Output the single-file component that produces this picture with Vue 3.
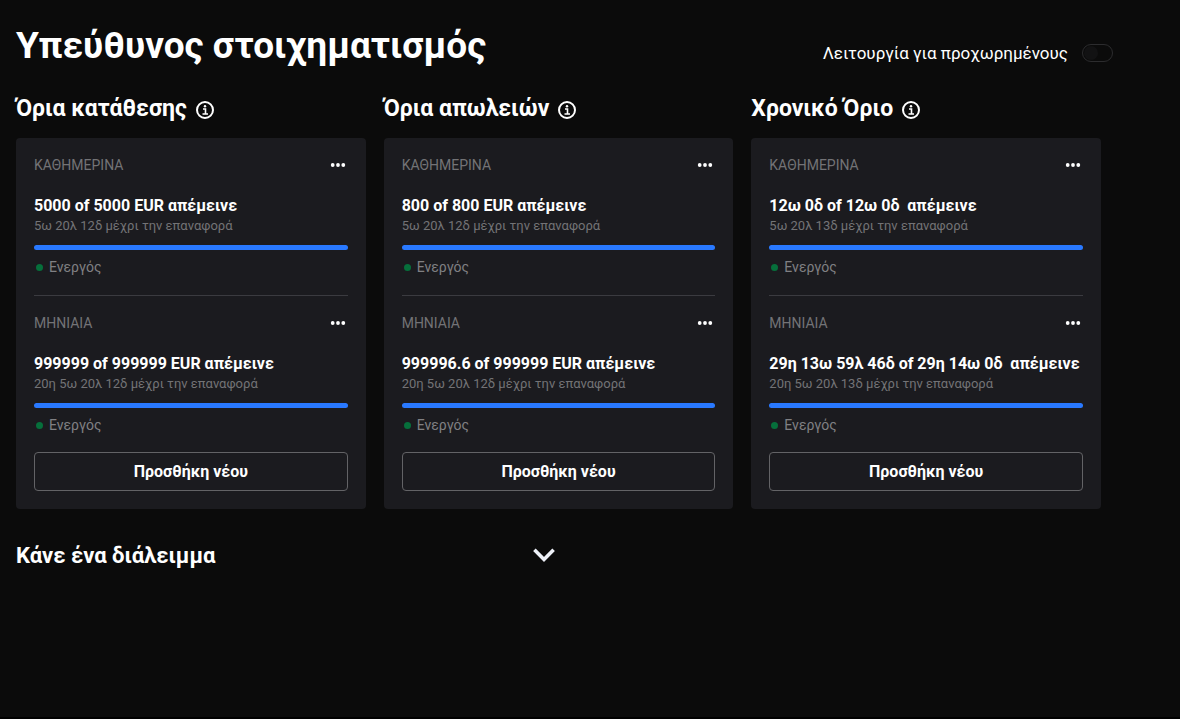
<script setup>
import { ref } from 'vue'

const advanced = ref(false)

const sections = [
  {
    title: 'Όρια κατάθεσης',
    limits: [
      { period: 'ΚΑΘΗΜΕΡΙΝΑ', amount: '5000 of 5000 EUR απέμεινε', reset: '5ω 20λ 12δ μέχρι την επαναφορά' },
      { period: 'ΜΗΝΙΑΙΑ', amount: '999999 of 999999 EUR απέμεινε', reset: '20η 5ω 20λ 12δ μέχρι την επαναφορά' }
    ]
  },
  {
    title: 'Όρια απωλειών',
    limits: [
      { period: 'ΚΑΘΗΜΕΡΙΝΑ', amount: '800 of 800 EUR απέμεινε', reset: '5ω 20λ 12δ μέχρι την επαναφορά' },
      { period: 'ΜΗΝΙΑΙΑ', amount: '999996.6 of 999999 EUR απέμεινε', reset: '20η 5ω 20λ 12δ μέχρι την επαναφορά' }
    ]
  },
  {
    title: 'Χρονικό Όριο',
    limits: [
      { period: 'ΚΑΘΗΜΕΡΙΝΑ', amount: '12ω 0δ of 12ω 0δ  απέμεινε', reset: '5ω 20λ 13δ μέχρι την επαναφορά' },
      { period: 'ΜΗΝΙΑΙΑ', amount: '29η 13ω 59λ 46δ of 29η 14ω 0δ  απέμεινε', reset: '20η 5ω 20λ 13δ μέχρι την επαναφορά' }
    ]
  }
]
</script>

<template>
  <main class="page">
    <header class="header">
      <h1>Υπεύθυνος στοιχηματισμός</h1>
      <label class="mode">
        <span>Λειτουργία για προχωρημένους</span>
        <input v-model="advanced" class="switch" type="checkbox" role="switch" />
      </label>
    </header>

    <div class="sections">
      <section v-for="section in sections" :key="section.title">
        <div class="heading">
          <h2>{{ section.title }}</h2>
          <button class="icon-button info" type="button" :aria-label="section.title">
            <svg width="20" height="20" viewBox="0 0 20 20" fill="none" stroke="#fff" stroke-width="2">
              <circle cx="10" cy="10" r="8" />
              <path d="M8 9h2.5v5M7.5 14h5.5" stroke-width="1.6" />
              <circle cx="10" cy="6.2" r="1.2" fill="#fff" stroke="none" />
            </svg>
          </button>
        </div>
        <div class="card">
          <article v-for="limit in section.limits" :key="limit.period" class="limit">
            <div class="top">
              <h3>{{ limit.period }}</h3>
              <button class="icon-button" type="button" :aria-label="limit.period">
                <svg width="20" height="18" viewBox="0 0 20 18" fill="#fff">
                  <circle cx="4.7" cy="9" r="1.9" />
                  <circle cx="10" cy="9" r="1.9" />
                  <circle cx="15.3" cy="9" r="1.9" />
                </svg>
              </button>
            </div>
            <p class="amount">{{ limit.amount }}</p>
            <p class="reset">{{ limit.reset }}</p>
            <div class="bar"></div>
            <p class="status"><span class="dot"></span>Ενεργός</p>
          </article>
          <button class="add" type="button">Προσθήκη νέου</button>
        </div>
      </section>
    </div>

    <button class="break" type="button">
      <span>Κάνε ένα διάλειμμα</span>
      <svg width="24" height="24" viewBox="0 0 24 24" fill="none" stroke="#eef1f8" stroke-width="3.6">
        <path d="M2.4 5.8 12 15.4 21.6 5.8" />
      </svg>
    </button>
  </main>
</template>

<style>
body {
  background: #0b0b0b;
}
</style>

<style scoped>
.page {
  box-sizing: border-box;
  min-height: 100vh;
  padding: 22px 16px 24px;
  border-bottom: 2px solid #000;
  background: #0b0b0b;
  color: #fff;
  font-family: Roboto, "Liberation Sans", sans-serif;
}

h1,
h2,
h3,
p {
  margin: 0;
}

button {
  padding: 0;
  border: 0;
  background: none;
  color: inherit;
  font: inherit;
  cursor: pointer;
}

svg {
  display: block;
}

.header {
  display: flex;
  align-items: center;
  justify-content: space-between;
  margin-right: 51px;
}

h1 {
  font-size: 37px;
  line-height: 48px;
  font-weight: 700;
}

.mode {
  display: flex;
  align-items: center;
  gap: 14px;
  padding-top: 14px;
  font-size: 17px;
  line-height: 20px;
}

.switch {
  appearance: none;
  box-sizing: border-box;
  display: flex;
  align-items: center;
  width: 31px;
  height: 18px;
  margin: 0;
  padding: 1px;
  border: 1px solid #2c2c2e;
  border-radius: 9px;
}

.switch::before {
  content: "";
  width: 14px;
  height: 14px;
  border-radius: 50%;
  background: #121213;
}

.switch:checked {
  justify-content: flex-end;
}

.sections {
  display: grid;
  grid-template-columns: repeat(3, minmax(0, 1fr));
  gap: 18px;
  margin: 23px 63px 0 0;
}

.heading {
  display: flex;
  align-items: center;
  gap: 8px;
  height: 32px;
  margin-bottom: 13px;
}

h2,
.break {
  font-size: 23px;
  line-height: 32px;
  font-weight: 700;
}

.info {
  padding-top: 2px;
}

.card {
  padding: 18px;
  border-radius: 4px;
  background: #1b1b1f;
}

.limit + .limit {
  margin-top: 19px;
  padding-top: 18px;
  border-top: 1px solid #3b3b40;
}

.top {
  display: flex;
  align-items: center;
  justify-content: space-between;
}

h3 {
  font-size: 14px;
  line-height: 18px;
  font-weight: 400;
  color: #737376;
}

.amount {
  margin-top: 22px;
  font-size: 16px;
  line-height: 20px;
  font-weight: 700;
  white-space: pre-wrap;
}

.reset {
  font-size: 13px;
  line-height: 20px;
  color: #737376;
}

.bar {
  height: 5px;
  margin: 9px 0 8px;
  border-radius: 3px;
  background: #2979ff;
}

.status {
  display: flex;
  align-items: center;
  gap: 6px;
  padding-left: 2px;
  font-size: 14px;
  line-height: 18px;
  color: #808083;
}

.dot {
  width: 7px;
  height: 7px;
  border-radius: 50%;
  background: #066f3b;
}

.add {
  width: 100%;
  height: 39px;
  margin-top: 18px;
  border: 1px solid #636366;
  border-radius: 4px;
  font-size: 16px;
  font-weight: 700;
}

.break {
  display: flex;
  align-items: center;
  justify-content: space-between;
  width: 47%;
  margin-top: 31px;
  font-size: 22px;
  text-align: left;
}
</style>
